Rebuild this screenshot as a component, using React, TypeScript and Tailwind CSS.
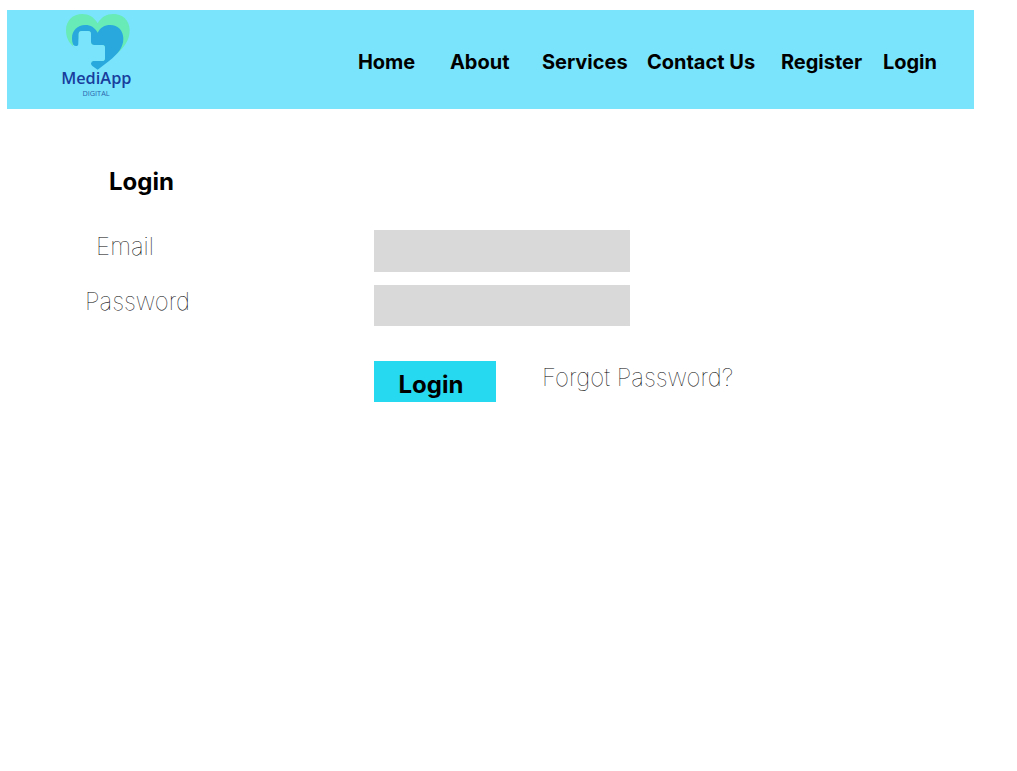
const links = ["Home", "About", "Services", "Contact Us", "Register", "Login"];

function Logo() {
  return (
    <svg viewBox="0 15 285 285" className="size-[95px] shrink-0" role="img" aria-label="MediApp Digital">
      <path
        d="M143 55C132 36 116 27 97 27C68 27 48 47 48 76C48 98 57 113 68 123L143 188L196 150C224 128 239 104 239 76C239 47 219 27 190 27C170 27 154 36 143 55Z"
        fill="#68ebb7"
      />
      <path
        d="M68 123L143 196L123 168V120L86 100Z"
        fill="#7ae4fc"
      />
      <path
        d="M143 83C134 67 122 60 106 60C82 60 66 77 66 99C66 108 67 114 70 119Q74 124 80 123Q86 122 86 116V88Q86 78 96 78H113Q123 78 123 88V111Q123 120 132 120H157Q165 120 165 129V158Q165 168 156 168H130Q123 168 123 175Q123 180 127 183L143 194L178 167C204 146 220 127 220 101C220 77 204 60 181 60C163 60 151 68 143 83Z"
        fill="#29a8de"
      />
      <path
        d="M86 100V88Q86 78 96 78H113Q123 78 123 88V111Q123 120 132 120H157Q165 120 165 129V158Q165 168 156 168H130Q123 168 123 175L84 146Z"
        fill="#7ae4fc"
      />
      <text x="139" y="236" textAnchor="middle" fontSize="49" fill="#183d9c" className="font-['Open_Sans',sans-serif] font-semibold">
        MediApp
      </text>
      <text x="138" y="273" textAnchor="middle" fontSize="22" fill="#2c66ae" className="font-['Open_Sans',sans-serif]">
        DIGITAL
      </text>
    </svg>
  );
}

export default function App() {
  return (
    <div className="min-h-screen bg-white pt-[10px] pr-[43px] pl-[7px] font-[Inter,sans-serif] text-black antialiased">
      <header className="flex h-[99px] items-start justify-between bg-[#7ae4fc] pr-[37px] pl-[43px]">
        <Logo />
        <nav className="grid grid-cols-[92px_92px_105px_134px_102px_auto] pt-[38px] text-[20px] leading-7 font-bold whitespace-nowrap">
          {links.map((label) => (
            <a key={label} href="#">
              {label}
            </a>
          ))}
        </nav>
      </header>

      <main className="pt-[57px]">
        <h1 className="w-[269px] text-center text-[24px] leading-8 font-bold">Login</h1>
        <form className="pt-8" onSubmit={(event) => event.preventDefault()}>
          <div className="grid grid-cols-[261px_256px] gap-x-[106px] gap-y-[13px] text-[24px] leading-[34px] font-thin">
            <label htmlFor="email" className="text-center">
              <span className="pr-[25px]">Email</span>
            </label>
            <input id="email" type="email" className="h-[42px] bg-[#d9d9d9] px-3 text-base font-normal" />
            <label htmlFor="password" className="text-center">
              <span>Password</span>
            </label>
            <input id="password" type="password" className="h-[41px] bg-[#d9d9d9] px-3 text-base font-normal" />
          </div>
          <div className="flex items-start gap-[46px] pt-[35px] pl-[367px]">
            <button type="submit" className="h-[41px] w-[122px] bg-[#26d9f1] pt-1.5 pr-2 text-[24px] leading-8 font-bold">
              Login
            </button>
            <a href="#" className="text-[24px] leading-[34px] font-thin whitespace-nowrap">
              Forgot Password?
            </a>
          </div>
        </form>
      </main>
    </div>
  );
}
